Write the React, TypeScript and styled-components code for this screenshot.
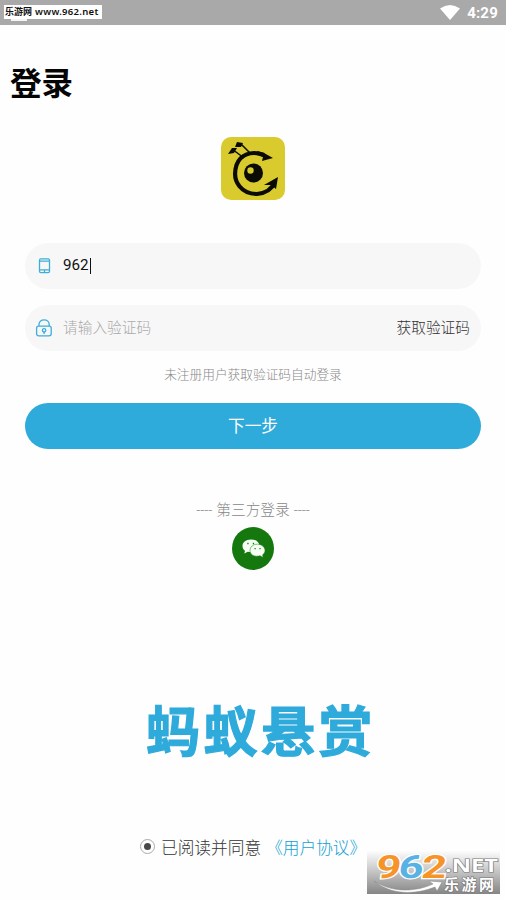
import React from "react";
import styled, { createGlobalStyle } from "styled-components";

const GlobalStyle = createGlobalStyle`
  * { box-sizing: border-box; }
  body { margin: 0; background: #fff; }
`;

const Screen = styled.div`
  position: relative;
  width: 506px;
  height: 900px;
  overflow: hidden;
  display: flex;
  flex-direction: column;
  background: #fefefe;
  font-family: Roboto, "Noto Sans CJK SC", sans-serif;
`;

const StatusBar = styled.header`
  height: 25px;
  flex: none;
  display: flex;
  justify-content: space-between;
  align-items: flex-start;
  padding: 5px 8px 0 4px;
  background: #a9a9a9;
`;

const SiteTag = styled.div`
  position: relative;
  width: 98px;
  height: 14px;
  display: flex;
  align-items: center;
  gap: 3px;
  padding-left: 1px;
  background: #fff;
  color: #111;
  font: 700 9px/14px "Noto Sans", "Noto Sans CJK SC", sans-serif;
  white-space: nowrap;

  &::after {
    content: "";
    position: absolute;
    left: 7px;
    top: 14px;
    width: 16px;
    height: 2px;
    background: #f4f4f4;
  }
`;

const SiteAddress = styled.span`
  font-size: 9.5px;
  font-weight: 600;
  letter-spacing: 0.3px;
`;

const SystemStatus = styled.div`
  display: flex;
  align-items: flex-start;
  gap: 7px;
  color: #fff;
  font-size: 15px;
  font-weight: 700;
  line-height: 17px;
  letter-spacing: 0.2px;
`;

const Title = styled.h1`
  margin: 37px 0 0 10px;
  height: 46px;
  font-size: 31.5px;
  line-height: 46px;
  font-weight: 700;
  color: #050505;
`;

const AppLogo = styled.svg`
  flex: none;
  display: block;
  margin: 29px auto 0 221px;
`;

const Form = styled.form`
  display: flex;
  flex-direction: column;
  margin: 43px 25px 0;
`;

const Field = styled.div`
  height: 46px;
  display: flex;
  align-items: center;
  padding: 0 11px 0 9px;
  border-radius: 23px;
  background: #f7f7f7;

  & + & { margin-top: 16px; }
`;

const FieldIcon = styled.svg`
  flex: none;
  width: 20px;
  height: 20px;
  margin-right: 9px;
  fill: none;
  stroke: #3eaed9;
  stroke-width: 1.3;
`;

const Value = styled.span`
  font-size: 15.2px;
  line-height: 22px;
  color: #111;
  margin-top: -2px;
`;

const Caret = styled.i`
  width: 1px;
  height: 16px;
  margin-left: 1px;
  background: #111;
`;

const Placeholder = styled.span`
  flex: 1;
  font-size: 14.7px;
  line-height: 22px;
  font-weight: 300;
  color: #aaa;
`;

const CodeLink = styled.span`
  font-size: 14.7px;
  line-height: 22px;
  font-weight: 300;
  color: #333;
`;

const Hint = styled.p`
  height: 20px;
  margin: 14px 0 0;
  text-align: center;
  font-size: 12.7px;
  line-height: 20px;
  font-weight: 300;
  color: #888;
`;

const NextButton = styled.button`
  height: 46px;
  margin: 18px 0 0;
  padding: 0 0 2px;
  border: 0;
  border-radius: 23px;
  background: #2eaadb;
  color: #fff;
  font-family: inherit;
  font-size: 16.7px;
`;

const ThirdParty = styled.section`
  display: flex;
  flex-direction: column;
  align-items: center;
  margin-top: 49px;
`;

const ThirdPartyLabel = styled.div`
  display: flex;
  gap: 4px;
  height: 24px;
  font-size: 14.7px;
  line-height: 24px;
  font-weight: 300;
  color: #888;
`;

const Dashes = styled.span`
  width: 16px;
  font-size: 14px;
  white-space: nowrap;
`;

const WechatIcon = styled.svg`
  display: block;
  margin-top: 5px;
`;

const Brand = styled.div`
  height: 80px;
  margin: 124px 0 0 146px;
  color: #2eaadb;
  font-size: 54px;
  line-height: 80px;
  font-weight: 700;
  letter-spacing: 3.5px;
  -webkit-text-stroke: 1.2px #2eaadb;
  white-space: nowrap;
`;

const Agreement = styled.label`
  display: flex;
  align-items: center;
  height: 24px;
  margin: 63px 0 0 140px;
  font-size: 16.7px;
  line-height: 24px;
  font-weight: 300;
  color: #333;
  white-space: nowrap;
`;

const Radio = styled.span`
  display: flex;
  align-items: center;
  justify-content: center;
  width: 15px;
  height: 15px;
  margin: 0 6px 5px 0;
  border: 1px solid #aaa;
  border-radius: 50%;

  &::after {
    content: "";
    width: 7px;
    height: 7px;
    border-radius: 50%;
    background: #484848;
  }
`;

const Terms = styled.span`
  margin-left: 5px;
  color: #169fd5;
`;

const Watermark = styled.svg`
  position: absolute;
  left: 367px;
  top: 851px;
`;

export default function App() {
  return (
    <Screen>
      <GlobalStyle />
      <StatusBar>
        <SiteTag><span>乐游网</span><SiteAddress>www.962.net</SiteAddress></SiteTag>
        <SystemStatus>
          <svg width="20" height="15" viewBox="0 0 20 15">
            <path d="M0 3.6 Q10 -3.4 20 3.6 L10 15Z" fill="#fff" />
          </svg>
          <span>4:29</span>
        </SystemStatus>
      </StatusBar>

      <Title>登录</Title>

      <AppLogo width="64" height="63" viewBox="0 0 64 63">
        <rect width="64" height="63" rx="10" fill="#d9ca2d" />
        <path d="M43 18 C30 13 19 18 15.5 28 C10 46 22 57 36 57 C46 56 51 52 54 45" fill="none" stroke="#0b0b05" strokeWidth="4.2" />
        <path d="M36 14 L43 16 L52 21 L41 24 L42 20 L36 18Z M43 48 L57 40 L55 52 L50 48Z" fill="#0b0b05" />
        <path d="M23 21 L11 12 M29 16 L20 7" stroke="#0b0b05" strokeWidth="1.5" />
        <path d="M7 17 L11 11 L16 11 L13 16Z M14 10 L16 5 L22 6 L20 10Z" fill="#0b0b05" />
        <circle cx="32.5" cy="36" r="9.5" fill="#0b0b05" />
        <circle cx="29.5" cy="33.5" r="3.2" fill="#d9ca2d" />
      </AppLogo>

      <Form>
        <Field>
          <FieldIcon viewBox="0 0 20 20">
            <rect x="5.5" y="2.9" width="10" height="13.7" rx="1.4" />
            <path d="M5.5 5.2H15.5M5.5 13.8H15.5M10.5 13.8V16.5" />
          </FieldIcon>
          <Value>962</Value>
          <Caret />
        </Field>
        <Field>
          <FieldIcon viewBox="0 0 20 20">
            <rect x="2.6" y="8.2" width="14.6" height="9.6" rx="2" />
            <path d="M5 8V6.5C5 .4 15.2 .4 15.2 6.5V8M10.1 14V16" />
            <circle cx="10.1" cy="12.3" r="1.7" />
          </FieldIcon>
          <Placeholder>请输入验证码</Placeholder>
          <CodeLink>获取验证码</CodeLink>
        </Field>
        <Hint>未注册用户获取验证码自动登录</Hint>
        <NextButton type="button">下一步</NextButton>
      </Form>

      <ThirdParty>
        <ThirdPartyLabel>
          <Dashes>----</Dashes>
          <span>第三方登录</span>
          <Dashes>----</Dashes>
        </ThirdPartyLabel>
        <WechatIcon width="42" height="43" viewBox="0 0 42 43">
          <ellipse cx="21" cy="21.5" rx="21" ry="21.5" fill="#14780f" />
          <path d="M19 12.5C13.5 12.5 10.5 15.5 10.5 19C10.5 21.3 11.5 22.7 13 23.8L12.3 26.5L15.8 24.7C17 25 18 25.1 19 25.1C24.2 24.8 27.5 22.3 27.5 18.8C27.3 15 23.8 12.5 19 12.5Z" fill="#f6fff4" />
          <path d="M25.5 17.2C21 17.2 18 20 18 23.4C18 27 21.2 29.2 25 29.2C26 29.2 27 29 28 28.7L31 30.5L30.6 27.8C32 26.7 33 25.3 33 23.4C33 20 29.5 17.2 25.5 17.2Z" fill="#f6fff4" stroke="#14780f" strokeWidth=".5" />
          <path d="M15.3 16.5h1.3M20.8 16.5h1.3M22.5 21.6h1.2M27.4 21.6h1.2" stroke="#14780f" strokeWidth="1.3" />
        </WechatIcon>
      </ThirdParty>

      <Brand>蚂蚁悬赏</Brand>

      <Agreement>
        <Radio />
        <span>已阅读并同意</span>
        <Terms>《用户协议》</Terms>
      </Agreement>

      <Watermark width="133" height="43" viewBox="0 0 133 43">
        <defs>
          <linearGradient id="plate" x1="0" y1="0" x2="0" y2="1">
            <stop offset="0" stopColor="#fdfdfd" />
            <stop offset=".5" stopColor="#c2c2c2" />
            <stop offset="1" stopColor="#858585" />
          </linearGradient>
        </defs>
        <rect width="133" height="43" fill="url(#plate)" />
        <g transform="translate(8 26.5) skewX(-7)" fontFamily="Roboto, sans-serif" fontWeight="700" fontSize="32" stroke="#fff" strokeWidth="2.4" paintOrder="stroke">
          <text x="0" y="0" textLength="25" lengthAdjust="spacingAndGlyphs" fill="#f6942a">9</text>
          <text x="22.5" y="0" textLength="25" lengthAdjust="spacingAndGlyphs" fill="#59b2e4">6</text>
          <text x="45.5" y="0" textLength="25" lengthAdjust="spacingAndGlyphs" fill="#f6942a">2</text>
        </g>
        <path d="M7 30C25 42 49 41 66 33L62 30L75 31L70 40L68 36C48 44 24 44 7 30Z" fill="#fff" stroke="#888" strokeWidth=".5" />
        <g fill="#fff" stroke="#777" strokeWidth="1.2" paintOrder="stroke" fontWeight="700">
          <text x="78" y="21" fontFamily="Noto Sans, sans-serif" fontSize="18" textLength="53" lengthAdjust="spacingAndGlyphs">.NET</text>
          <text x="77" y="39" fontFamily="Noto Sans CJK SC, sans-serif" fontSize="15" textLength="50">乐游网</text>
        </g>
      </Watermark>
    </Screen>
  );
}
